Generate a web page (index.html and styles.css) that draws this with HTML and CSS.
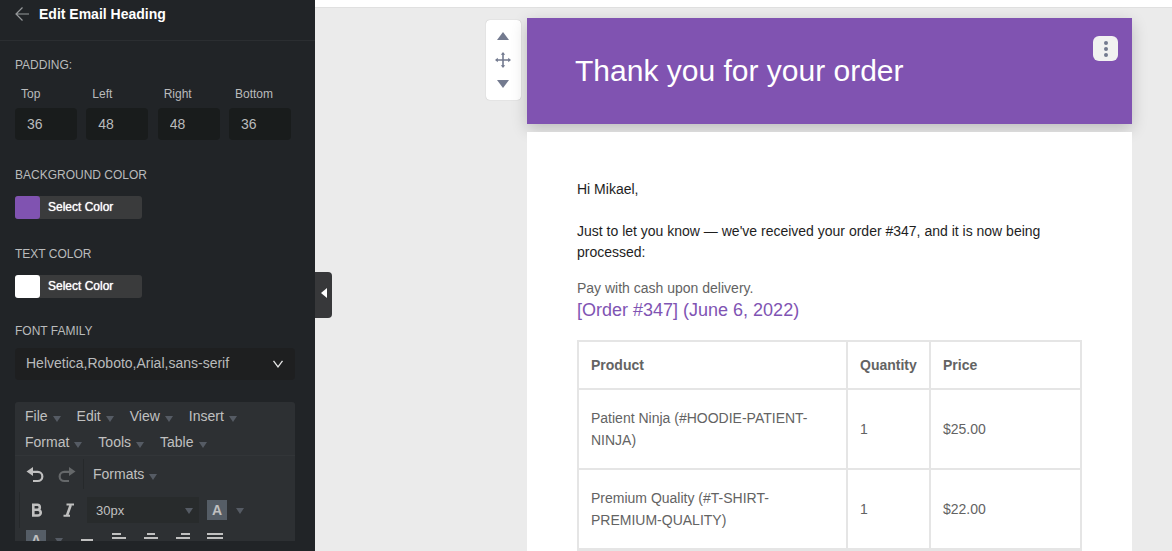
FILE: index.html
```html
<!DOCTYPE html>
<html lang="en">
<head>
    <meta charset="UTF-8">
    <meta name="viewport" content="width=device-width, initial-scale=1.0">
    <title>Edit Email Heading</title>
    <link rel="stylesheet" href="styles.css">
</head>
<body>
    <div class="app">
        <!-- Settings panel -->
        <aside class="sidebar">
            <header class="sidebar-header">
                <button class="back" aria-label="Back">
                    <svg width="14" height="14" viewBox="0 0 14 14" fill="none" stroke="#96999b" stroke-width="1.200"><path d="M14 7H1M7.500 .5L1 7l6.500 6.500"/></svg>
                </button>
                <h1>Edit Email Heading</h1>
            </header>

            <div class="settings">
                <div class="field">
                    <div class="field-title">PADDING:</div>
                    <div class="paddings">
                        <div class="padding-item">
                            <label for="pad-top">Top</label>
                            <input id="pad-top" type="text" value="36">
                        </div>
                        <div class="padding-item">
                            <label for="pad-left">Left</label>
                            <input id="pad-left" type="text" value="48">
                        </div>
                        <div class="padding-item">
                            <label for="pad-right">Right</label>
                            <input id="pad-right" type="text" value="48">
                        </div>
                        <div class="padding-item">
                            <label for="pad-bottom">Bottom</label>
                            <input id="pad-bottom" type="text" value="36">
                        </div>
                    </div>
                </div>

                <div class="field">
                    <div class="field-title">BACKGROUND COLOR</div>
                    <button class="color-btn"><span class="swatch swatch-purple"></span><span class="color-text">Select Color</span></button>
                </div>

                <div class="field">
                    <div class="field-title">TEXT COLOR</div>
                    <button class="color-btn"><span class="swatch swatch-white"></span><span class="color-text">Select Color</span></button>
                </div>

                <div class="field field-font">
                    <label class="field-title" for="font-family">FONT FAMILY</label>
                    <div class="select-wrap">
                        <select id="font-family">
                            <option>Helvetica,Roboto,Arial,sans-serif</option>
                        </select>
                        <svg class="chevron" width="12" height="8" viewBox="0 0 12 8" fill="none" stroke="#e6e6e6" stroke-width="1.300"><path d="M1.500 .8L6 6.800 10.500 .8"/></svg>
                    </div>
                </div>

                <!-- Text editor -->
                <div class="editor">
                    <div class="menubar">
                        <button class="menu">File<span class="caret"></span></button>
                        <button class="menu">Edit<span class="caret"></span></button>
                        <button class="menu">View<span class="caret"></span></button>
                        <button class="menu">Insert<span class="caret"></span></button>
                        <button class="menu">Format<span class="caret"></span></button>
                        <button class="menu">Tools<span class="caret"></span></button>
                        <button class="menu">Table<span class="caret"></span></button>
                    </div>
                    <div class="tool-row">
                        <div class="history">
                            <button class="tool" aria-label="Undo">
                                <svg width="18" height="16" viewBox="0 0 18 16"><path d="M7 0v9L.5 4.500z" fill="#c0c0c0"/><path d="M6 4.900h5.800a4.500 4.500 0 0 1 0 9.100H7" fill="none" stroke="#c0c0c0" stroke-width="2.200"/></svg>
                            </button>
                            <button class="tool" aria-label="Redo">
                                <svg width="18" height="16" viewBox="0 0 18 16"><path d="M11 0v9l6.500-4.500z" fill="#65686a"/><path d="M12 4.900H6.200a4.500 4.500 0 0 0 0 9.100H11" fill="none" stroke="#65686a" stroke-width="2.200"/></svg>
                            </button>
                        </div>
                        <button class="menu">Formats<span class="caret"></span></button>
                    </div>
                    <div class="tool-row tool-row-format">
                        <button class="tool" aria-label="Bold">
                            <svg width="12" height="14" viewBox="0 0 12 14" fill="none" stroke="#c0c0c0" stroke-width="2.600"><path d="M2.300 1.800h4a2.400 2.400 0 0 1 0 5h-4zM2.300 6.800h4.600a2.700 2.700 0 0 1 0 5.700H2.300z"/></svg>
                        </button>
                        <button class="tool" aria-label="Italic">
                            <svg width="12" height="14" viewBox="0 0 12 14" fill="none" stroke="#c0c0c0" stroke-width="2"><path d="M3.500 1.500H11M.5 12.800H7"/><path d="M7.700 2L4 12.500" stroke-width="2.600"/></svg>
                        </button>
                        <button class="size-btn">30px<span class="caret"></span></button>
                        <button class="letter-btn"><span class="letter">A</span><span class="caret"></span></button>
                    </div>
                    <div class="tool-row tool-row-align">
                        <button class="letter-btn"><span class="letter">A</span><span class="caret"></span></button>
                        <button class="tool" aria-label="Horizontal line">
                            <svg width="16" height="16" viewBox="0 0 16 16" fill="#c0c0c0"><path d="M2 7h12v2H2z"/></svg>
                        </button>
                        <button class="tool" aria-label="Align left">
                            <svg width="16" height="16" viewBox="0 0 16 16" fill="#c0c0c0"><path d="M1 1h9v2H1zM1 5h14v2H1zM1 9h9v2H1zM1 13h14v2H1z"/></svg>
                        </button>
                        <button class="tool" aria-label="Align center">
                            <svg width="16" height="16" viewBox="0 0 16 16" fill="#c0c0c0"><path d="M4 1h8v2H4zM1 5h14v2H1zM4 9h8v2H4zM1 13h14v2H1z"/></svg>
                        </button>
                        <button class="tool" aria-label="Align right">
                            <svg width="16" height="16" viewBox="0 0 16 16" fill="#c0c0c0"><path d="M6 1h9v2H6zM1 5h14v2H1zM6 9h9v2H6zM1 13h14v2H1z"/></svg>
                        </button>
                        <button class="tool" aria-label="Justify">
                            <svg width="16" height="16" viewBox="0 0 16 16" fill="#c0c0c0"><path d="M0 1h16v2H0zM0 5h16v2H0zM0 9h16v2H0zM0 13h16v2H0z"/></svg>
                        </button>
                    </div>
                </div>
            </div>

            <button class="collapse" aria-label="Collapse panel">
                <svg width="6" height="10" viewBox="0 0 6 10" fill="#fff"><path d="M6 0v10L0 5z"/></svg>
            </button>
        </aside>

        <!-- Email preview -->
        <main class="preview">
            <div class="topbar"></div>
            <div class="canvas">
                <div class="mover">
                    <button aria-label="Move up"><svg width="12" height="8" viewBox="0 0 12 8" fill="#737a8f"><path d="M6 0l6 8H0z"/></svg></button>
                    <button aria-label="Move"><svg width="16" height="16" viewBox="0 0 16 16" fill="#737a8f"><path d="M8 0l2.200 2.800H8.800v4.400h4.400V5.800L16 8l-2.800 2.200V8.800H8.800v4.400h1.400L8 16l-2.200-2.800h1.400V8.800H2.800v1.400L0 8l2.800-2.200v1.400h4.400V2.800H5.800z"/></svg></button>
                    <button aria-label="Move down"><svg width="12" height="8" viewBox="0 0 12 8" fill="#737a8f"><path d="M0 0h12L6 8z"/></svg></button>
                </div>
                <div class="email">
                    <div class="email-heading">
                        <h2>Thank you for your order</h2>
                        <button class="more" aria-label="More">
                            <svg width="4" height="16" viewBox="0 0 4 16" fill="#737a8f"><circle cx="2" cy="2" r="2"/><circle cx="2" cy="8" r="2"/><circle cx="2" cy="14" r="2"/></svg>
                        </button>
                    </div>
                    <div class="email-body">
                        <p class="intro">Hi Mikael,</p>
                        <p class="intro">Just to let you know — we've received your order #347, and it is now being processed:</p>
                        <p class="payment">Pay with cash upon delivery.</p>
                        <h3>[Order #347] (June 6, 2022)</h3>
                        <table class="order">
                            <thead>
                                <tr>
                                    <th class="col-product">Product</th>
                                    <th class="col-quantity">Quantity</th>
                                    <th>Price</th>
                                </tr>
                            </thead>
                            <tbody>
                                <tr>
                                    <td>Patient Ninja (#HOODIE-PATIENT-NINJA)</td>
                                    <td>1</td>
                                    <td>$25.00</td>
                                </tr>
                                <tr>
                                    <td>Premium Quality (#T-SHIRT-PREMIUM-QUALITY)</td>
                                    <td>1</td>
                                    <td>$22.00</td>
                                </tr>
                            </tbody>
                        </table>
                    </div>
                </div>
            </div>
        </main>
    </div>
</body>
</html>
```
FILE: styles.css
```css
* {
    box-sizing: border-box;
}

body {
    margin: 0;
    font-family: "Liberation Sans", Arial, sans-serif;
    font-size: 14px;
}

h1, h2, h3, p {
    margin: 0;
}

button {
    display: flex;
    align-items: center;
    margin: 0;
    padding: 0;
    border: none;
    background: none;
    color: inherit;
    font: inherit;
    cursor: pointer;
}

svg {
    display: block;
    flex: none;
}

.app {
    display: flex;
    height: 100vh;
    overflow: hidden;
}

/* Sidebar */
.sidebar {
    position: relative;
    z-index: 1;
    display: flex;
    flex-direction: column;
    flex: none;
    width: 315px;
    background: #212427;
    color: #b9bbbc;
}

.sidebar-header {
    display: flex;
    align-items: center;
    gap: 10px;
    padding: 5px 15px 17px;
    border-bottom: 1px solid #2b2e31;
}

.sidebar-header h1 {
    color: #fff;
    font-size: 14px;
    line-height: 18px;
}

.settings {
    display: flex;
    flex-direction: column;
    flex: 1;
    min-height: 0;
    padding: 15px 20px 10px 15px;
}

.field {
    margin-bottom: 26px;
}

.field-title {
    display: block;
    margin-bottom: 12px;
    font-size: 12px;
    line-height: 18px;
}

.paddings {
    display: flex;
    justify-content: space-between;
    margin-top: -1px;
    padding-right: 4px;
}

.padding-item {
    width: 62px;
}

.padding-item label {
    display: block;
    margin-bottom: 5px;
    padding-left: 6px;
    font-size: 12px;
    line-height: 18px;
}

.padding-item input {
    display: block;
    width: 100%;
    height: 32px;
    padding: 0 12px;
    border: none;
    border-radius: 4px;
    background: #191c1c;
    color: #b9bbbc;
    font: inherit;
}

.color-btn {
    width: 127px;
    height: 23px;
    border-radius: 3px;
    background: #3a3b3c;
    color: #fff;
    font-size: 12px;
}

.swatch {
    width: 25px;
    height: 23px;
    margin-right: 8px;
    border-radius: 3px;
}

.color-text {
    padding-bottom: 2px;
    text-shadow: 0 0 1px #fff;
}

.swatch-purple {
    background: #8053b1;
}

.swatch-white {
    background: #fff;
}

.field-font {
    margin-top: -2px;
    margin-bottom: 22px;
}

.field-font .field-title {
    margin-bottom: 8px;
}

.select-wrap {
    position: relative;
}

.select-wrap select {
    display: block;
    width: 100%;
    height: 32px;
    padding: 0 30px 2px 11px;
    border: none;
    border-radius: 4px;
    background: #1e1f20;
    color: #b9bbbc;
    font: inherit;
    appearance: none;
}

.chevron {
    position: absolute;
    top: 12px;
    right: 11px;
    pointer-events: none;
}

/* Handle that hangs over the preview */
.collapse {
    position: absolute;
    top: 272px;
    left: 100%;
    justify-content: center;
    width: 17px;
    height: 46px;
    padding-bottom: 4px;
    border-radius: 0 4px 4px 0;
    background: #37383a;
}

/* Editor */
.editor {
    flex: 1;
    min-height: 0;
    overflow: hidden;
    border-radius: 3px 3px 0 0;
    background: #2d3033;
    color: #c0c0c0;
}

.menubar {
    display: flex;
    flex-wrap: wrap;
    column-gap: 16px;
    padding: 1px 10px 0;
    border-bottom: 1px solid #323538;
}

.menu {
    height: 26px;
    gap: 5px;
}

.caret {
    margin-top: 5px;
    border: 4px solid transparent;
    border-top: 6px solid #555b64;
    border-bottom: none;
}

.tool-row {
    display: flex;
    align-items: center;
    height: 36px;
}

.history {
    display: flex;
    align-items: center;
    gap: 14px;
    height: 30px;
    margin-right: 9px;
    padding: 2px 7px 0 11px;
    border-right: 1px solid #26292b;
}

.tool-row-format {
    gap: 20px;
    margin-left: 4px;
    padding-left: 11px;
    border-left: 1px solid #26292b;
}

.size-btn {
    justify-content: space-between;
    width: 112px;
    height: 26px;
    margin: 0 -12px 0 -8px;
    padding: 0 6px 0 9px;
    background: #282b2c;
    font-size: 13px;
}

.size-btn .caret,
.letter-btn .caret {
    margin-top: 2px;
}

.letter-btn {
    gap: 9px;
}

.letter {
    width: 20px;
    height: 20px;
    background: #555d66;
    font-weight: bold;
    line-height: 20px;
}

.tool-row-align {
    gap: 16px;
    height: 24px;
    padding-left: 11px;
}

/* Preview */
.preview {
    display: flex;
    flex-direction: column;
    flex: 1;
    min-width: 0;
    background: #ebebeb;
}

.topbar {
    flex: none;
    height: 8px;
    border-bottom: 1px solid #e0e0e0;
    background: #fff;
}

.canvas {
    display: flex;
    justify-content: flex-end;
    align-items: flex-start;
    gap: 6px;
    padding: 10px 40px 0;
}

.mover {
    display: flex;
    flex-direction: column;
    align-items: center;
    gap: 12px;
    width: 35px;
    margin-top: 2px;
    padding: 12px 1px 12px 0;
    border-radius: 4px;
    background: #fff;
    box-shadow: 0 0 1px rgba(0, 0, 0, 0.3);
}

.email {
    flex: 0 1 605px;
}

.email-heading {
    position: relative;
    margin-bottom: 8px;
    padding: 36px 48px;
    background: #8053b1;
    box-shadow: 0 5px 15px rgba(0, 0, 0, 0.2);
}

.email-heading h2 {
    color: #fff;
    font-size: 30px;
    font-weight: normal;
    line-height: 34px;
}

.more {
    position: absolute;
    top: 18px;
    right: 14px;
    justify-content: center;
    width: 25px;
    height: 25px;
    border-radius: 6px;
    background: #f1f1f1;
}

.email-body {
    position: relative;
    padding: 47px 50px;
    background: #fff;
    color: #636363;
    line-height: 22px;
}

.intro {
    margin-bottom: 21px;
    color: #1e1e1e;
    line-height: 21px;
}

.payment {
    margin-top: -7px;
}

.email-body h3 {
    margin-bottom: 19px;
    color: #7f54b3;
    font-size: 18px;
    font-weight: normal;
    line-height: 22px;
}

/* Order table */
.order {
    width: 100%;
    border: 2px solid #e5e5e5;
    border-bottom-width: 4px;
    border-collapse: collapse;
}

.order th,
.order td {
    padding: 12px;
    border: 2px solid #e5e5e5;
    text-align: left;
}

.order td {
    padding: 17px 12px;
}

.order tbody tr:last-child td {
    border-bottom-width: 4px;
}

.col-product {
    width: 269px;
}

.col-quantity {
    width: 83px;
}
```
